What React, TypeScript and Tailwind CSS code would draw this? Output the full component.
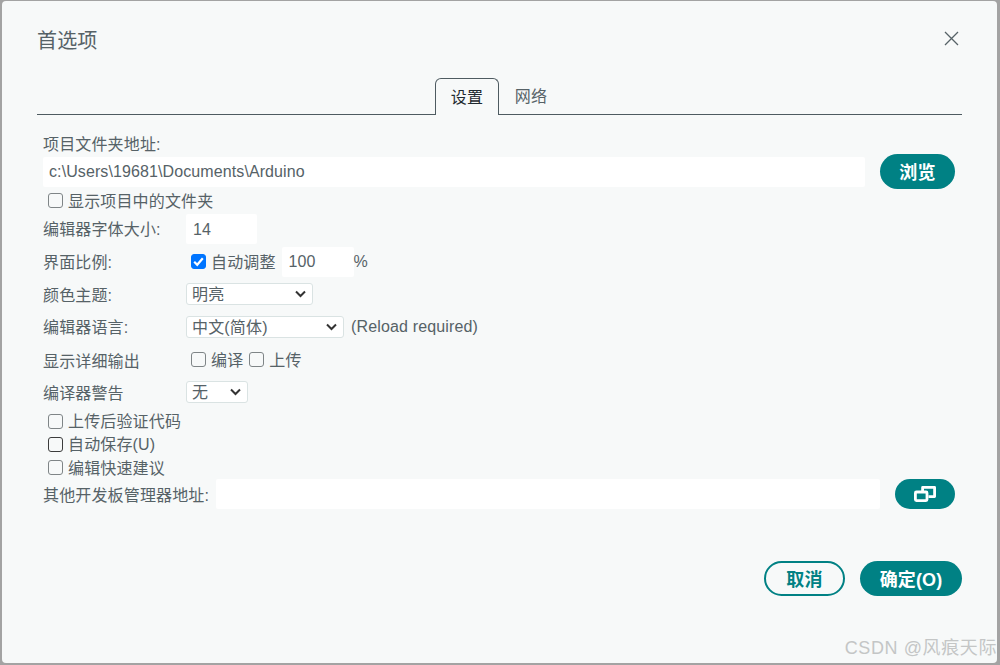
const font = "font-['Liberation_Sans','Noto_Sans_CJK_SC',sans-serif]";
const tealBtn = "rounded-full bg-[#008184] text-white font-bold flex items-center justify-center";
const inputCls = "h-[30px] rounded-[2px] bg-white text-[16px] tracking-[0.1px] text-[#566267] outline-none";

function Check({ label, checked, dark }: { label: string; checked?: boolean; dark?: boolean }) {
  return (
    <label className="flex items-center">
      <span className="relative -mt-[1px] h-[15px] w-[15px]">
        <input
          type="checkbox"
          defaultChecked={checked}
          className={
            "m-0 block h-[15px] w-[15px] appearance-none rounded-[3px] border-[1.5px] " +
            (checked ? "border-[#0075ff] bg-[#0075ff]" : dark ? "border-[#3c3c3c] bg-[#f7f9f9]" : "border-[#7f8587] bg-[#f7f9f9]")
          }
        />
        {checked && (
          <svg className="pointer-events-none absolute left-0 top-0" width="15" height="15" viewBox="0 0 15 15" fill="none" stroke="#fff" strokeWidth="2.2">
            <path d="M3.2 7.8L6.2 10.8L11.8 4.2" />
          </svg>
        )}
      </span>
      <span className="ml-[5px] pt-[1px]">{label}</span>
    </label>
  );
}

function Select({ value, width }: { value: string; width: string }) {
  return (
    <div className="relative">
      <select className={"block h-[22px] appearance-none rounded-[3px] border border-[#dae3e3] bg-white pl-[5px] pt-[2px] text-[16px] leading-[18px] tracking-[0.17px] text-[#566267] " + width}>
        <option>{value}</option>
      </select>
      <svg className="pointer-events-none absolute right-[7px] top-[7px]" width="11" height="8" viewBox="0 0 11 8" fill="none" stroke="#333" strokeWidth="2">
        <path d="M1 1.5L5.5 6L10 1.5" />
      </svg>
    </div>
  );
}

export default function App() {
  return (
    <div className={"h-[665px] w-[1000px] overflow-hidden bg-[#a3a3a3] pl-[2px] pr-[3px] pt-px pb-[2px] text-[16px] tracking-[0.15px] text-[#566267] " + font}>
      <div className="relative h-full rounded-[4px] bg-[#f7f9f9] px-[35px]">
        {/* title */}
        <div className="flex h-[77px] items-center justify-between pr-[3px]">
          <h1 className="mt-[3px] text-[20px] font-normal leading-none">首选项</h1>
          <button className="-mt-[2px] text-[#566267]">
            <svg width="15" height="15" viewBox="0 0 15 15" fill="none" stroke="currentColor" strokeWidth="1.3">
              <path d="M1 1L14 14M14 1L1 14" />
            </svg>
          </button>
        </div>

        {/* tabs */}
        <div className="flex h-[37px] justify-center border-b border-[#4e5b61] pr-[1px]">
          <div className="mb-[-1px] flex w-[64px] items-center justify-center rounded-t-[6px] border border-b-0 border-[#4e5b61] bg-[#f7f9f9] pt-[2px] text-[#1f2a30]">设置</div>
          <div className="flex w-[64px] items-center justify-center pt-[2px]">网络</div>
        </div>

        <div className="px-[6px]">
          <div className="mt-[19px] pt-[1px] leading-[19px]">项目文件夹地址:</div>

          <div className="flex items-center">
            <input defaultValue="c:\Users\19681\Documents\Arduino" className={inputCls + " w-[822px] px-[6px]"} />
            <button className={tealBtn + " ml-[15px] h-[35px] w-[75px] pt-[3px] text-[18px]"}>浏览</button>
          </div>

          <div className="mt-[1px] flex h-[22px] items-center pl-[5px]">
            <Check label="显示项目中的文件夹" />
          </div>

          <div className="mt-[2px] flex h-[30px] items-center">
            <div className="w-[143px] pt-[2px]">编辑器字体大小:</div>
            <input defaultValue="14" className={inputCls + " w-[71px] px-[7px] pt-[1px]"} />
          </div>

          <div className="mt-[3px] flex h-[30px] items-center">
            <div className="w-[148px] pt-[2px]">界面比例:</div>
            <Check label="自动调整" checked />
            <input defaultValue="100" className={inputCls + " ml-[6px] w-[72px] px-[7px]"} />
            <span>%</span>
          </div>

          <div className="mt-[6px] flex h-[22px] items-center">
            <div className="w-[143px] pt-[3px]">颜色主题:</div>
            <Select value="明亮" width="w-[127px]" />
          </div>

          <div className="mt-[11px] flex h-[22px] items-center">
            <div className="w-[143px] pt-[1px]">编辑器语言:</div>
            <Select value="中文(简体)" width="w-[158px]" />
            <span className="ml-[7px]">(Reload required)</span>
          </div>

          <div className="mt-[11px] flex h-[22px] items-center">
            <div className="w-[148px] pt-[3px]">显示详细输出</div>
            <Check label="编译" />
            <div className="ml-[6px]">
              <Check label="上传" />
            </div>
          </div>

          <div className="mt-[10px] flex h-[22px] items-center">
            <div className="w-[143px] pt-[3px]">编译器警告</div>
            <Select value="无" width="w-[62px]" />
          </div>

          <div className="mt-[7px] flex flex-col pl-[5px]">
            <div className="flex h-[23px] items-center"><Check label="上传后验证代码" /></div>
            <div className="flex h-[23px] items-center"><Check label="自动保存(U)" dark /></div>
            <div className="flex h-[23px] items-center pt-[1px]"><Check label="编辑快速建议" /></div>
          </div>

          <div className="flex h-[30px] items-center">
            <div className="w-[173px] pt-[3px]">其他开发板管理器地址:</div>
            <input className={inputCls + " w-[664px]"} />
            <button className={tealBtn + " ml-[15px] h-[30px] w-[60px]"}>
              <svg width="22" height="16" viewBox="0 0 22 16" fill="none" stroke="#fff" strokeWidth="2.8" strokeLinejoin="round">
                <rect x="1.4" y="6" width="11.6" height="8.6" rx="1" />
                <path d="M8.6 5V1.4H20.6V10.6H14.5" />
              </svg>
            </button>
          </div>
        </div>

        {/* footer */}
        <div className="mt-[52px] flex justify-end gap-[15px]">
          <button className="h-[35px] w-[81px] rounded-full border-2 border-[#008184] pt-[3px] text-[18px] font-bold text-[#008184]">取消</button>
          <button className={tealBtn + " h-[35px] w-[102px] pt-[3px] text-[18px]"}>确定(O)</button>
        </div>

        {/* CSDN watermark, sits over the dialog */}
        <div className="absolute bottom-[4px] right-0 text-[18px] leading-[22px] tracking-[0.6px] text-[#c4c6c6]">CSDN @风痕天际</div>
      </div>
    </div>
  );
}
